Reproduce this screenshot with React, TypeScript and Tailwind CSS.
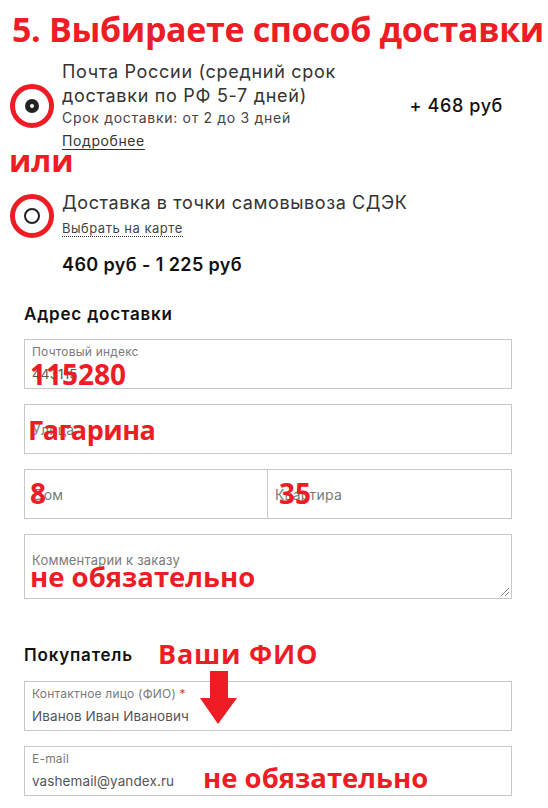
import React from "react";

const RED = "text-[#ee1c25]";

function Field({
  label,
  value,
  required,
  children,
}: {
  label: string;
  value?: string;
  required?: boolean;
  children?: React.ReactNode;
}) {
  return (
    <div className="relative ml-[24px] w-[488px] h-[50px] border border-[#c8c8c8] pl-[7px] pt-[4px]">
      <div className="text-[12px] leading-[16px] text-[#7a7a7a] tracking-[0.2px]">
        {label}
        {required && <span className="text-[#e53935]"> *</span>}
      </div>
      {value && <div className="mt-[4px] text-[13.5px] leading-[20px] text-[#555] tracking-[0.1px]">{value}</div>}
      {children}
    </div>
  );
}

function Placeholder({ text, className, children }: { text: string; className: string; children?: React.ReactNode }) {
  return (
    <div className={"relative h-[50px] border border-[#c8c8c8] pl-[7px] flex items-center " + className}>
      <span className="text-[14px] text-[#7a7a7a] tracking-[0.2px]">{text}</span>
      {children}
    </div>
  );
}

const Ann = ({ children, className }: { children: React.ReactNode; className: string }) => (
  <div className={"absolute font-['Open_Sans'] font-bold whitespace-nowrap " + RED + " " + className}>{children}</div>
);

export default function App() {
  return (
    <div className="w-[548px] h-[808px] bg-white overflow-hidden font-['Inter',sans-serif] text-[#333]">
      <h1 className={"pl-[12px] pt-[6px] font-['Open_Sans'] font-bold text-[34px] leading-[46px] tracking-[-0.35px] " + RED}>
        5. Выбираете способ доставки
      </h1>

      <div className="mt-[8px] flex items-center pl-[10px] pr-[45px]">
        <div className="w-[44px] h-[44px] rounded-full border-[5px] border-[#ee1c25] flex items-center justify-center shrink-0">
          <div className="w-[14px] h-[14px] rounded-full bg-[#222] flex items-center justify-center">
            <div className="w-[4px] h-[4px] rounded-full bg-white" />
          </div>
        </div>
        <div className="ml-[8px] flex-1">
          <div className="text-[18px] leading-[24px] text-[#333] tracking-[0.7px]">
            Почта России (средний срок
            <br />
            доставки по РФ 5-7 дней)
          </div>
          <div className="text-[14px] leading-[20px] text-[#444] tracking-[0.7px]">Срок доставки: от 2 до 3 дней</div>
          <div className="mt-[3px] text-[14px] leading-[20px] text-[#333] tracking-[0.6px] underline underline-offset-[3px]">Подробнее</div>
        </div>
        <div className="text-[18px] font-medium text-[#111] tracking-[0.6px]">+ 468 руб</div>
      </div>

      <div className={"pl-[9px] -mt-[8px] h-[48px] font-['Open_Sans'] font-bold text-[31px] leading-[34px] " + RED}>или</div>

      <div className="flex items-center pl-[10px]">
        <div className="w-[44px] h-[44px] rounded-full border-[5px] border-[#ee1c25] flex items-center justify-center shrink-0 mt-[2px]">
          <div className="w-[16px] h-[16px] rounded-full border-[2px] border-[#222]" />
        </div>
        <div className="ml-[8px]">
          <div className="text-[18px] leading-[24px] text-[#333] tracking-[0.6px]">Доставка в точки самовывоза СДЭК</div>
          <div className="mt-[3px] inline-block text-[13px] leading-[16px] text-[#444] tracking-[0.5px] border-b border-dotted border-[#333]">
            Выбрать на карте
          </div>
        </div>
      </div>

      <div className="mt-[14px] pl-[62px] text-[18px] leading-[24px] font-semibold text-[#111] tracking-[0.4px]">460 руб - 1 225 руб</div>

      <div className="mt-[25px] pl-[24px] text-[17px] leading-[24px] font-semibold text-[#111] tracking-[0.8px]">Адрес доставки</div>

      <div className="mt-[13px]">
        <Field label="Почтовый индекс" value="443115">
          <Ann className="left-[5px] top-[15px] text-[28px] leading-[38px]">115280</Ann>
        </Field>
      </div>

      <div className="mt-[15px] flex">
        <Placeholder text="Улица" className="ml-[24px] w-[488px]">
          <Ann className="left-[3px] top-[6px] text-[27px] leading-[38px] tracking-[-0.5px]">Гагарина</Ann>
        </Placeholder>
      </div>

      <div className="mt-[15px] ml-[24px] w-[488px] flex">
        <Placeholder text="Дом" className="w-[244px]">
          <Ann className="left-[5px] top-[4px] text-[28px] leading-[38px]">8</Ann>
        </Placeholder>
        <Placeholder text="Квартира" className="w-[245px] -ml-px">
          <Ann className="left-[11px] top-[4px] text-[28px] leading-[38px]">35</Ann>
        </Placeholder>
      </div>

      <div className="mt-[15px] relative ml-[24px] w-[488px] h-[65px] border border-[#c8c8c8] pl-[7px] pt-[16px]">
        <div className="text-[13px] leading-[18px] text-[#7a7a7a] tracking-[0.2px]">Комментарии к заказу</div>
        <Ann className="left-[5px] top-[25px] text-[27.5px] leading-[34px]">не обязательно</Ann>
        <svg className="absolute right-[1px] bottom-[1px]" width="10" height="10" viewBox="0 0 10 10">
          <line x1="9" y1="1" x2="1" y2="9" stroke="#888" strokeWidth="1" />
          <line x1="9" y1="5" x2="5" y2="9" stroke="#888" strokeWidth="1" />
        </svg>
      </div>

      <div className="relative mt-[44px] pl-[24px] text-[17px] leading-[24px] font-semibold text-[#111] tracking-[0.8px]">
        Покупатель
        <Ann className="left-[158px] -top-[8px] text-[27px] leading-[38px]">Ваши ФИО</Ann>
      </div>

      <div className="mt-[14px] relative">
        <Field label="Контактное лицо (ФИО)" value="Иванов Иван Иванович" required />
        <svg className="absolute left-[199px] -top-[10px]" width="40" height="54" viewBox="0 0 40 54">
          <polygon points="11,0 29,0 29,27 38,27 19,53 1,27 11,27" fill="#ee1c25" />
        </svg>
      </div>

      <div className="mt-[15px]">
        <Field label="E-mail" value="vashemail@yandex.ru">
          <Ann className="left-[178px] top-[14px] text-[27.5px] leading-[34px]">не обязательно</Ann>
        </Field>
      </div>
    </div>
  );
}
